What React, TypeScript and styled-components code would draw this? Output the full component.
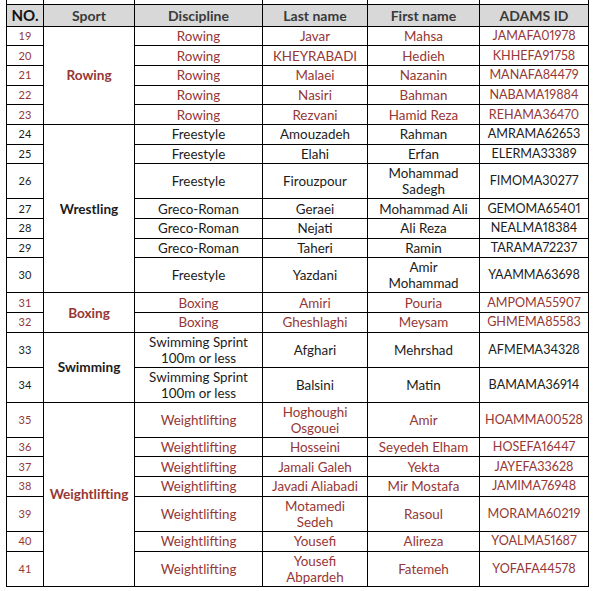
import React from "react";
import styled, { createGlobalStyle } from "styled-components";

const GlobalStyle = createGlobalStyle`
  html, body {
    margin: 0;
    padding: 0;
    background: #fff;
  }
  body {
    font-family: Lato, "Liberation Sans", sans-serif;
  }
`;

type Athlete = {
  no: number;
  discipline: string;
  last: string;
  first: string;
  id: string;
  tall?: boolean;
};

type Group = {
  sport: string;
  red: boolean;
  rows: Athlete[];
};

const groups: Group[] = [
  {
    sport: "Rowing",
    red: true,
    rows: [
      { no: 19, discipline: "Rowing", last: "Javar", first: "Mahsa", id: "JAMAFA01978" },
      { no: 20, discipline: "Rowing", last: "KHEYRABADI", first: "Hedieh", id: "KHHEFA91758" },
      { no: 21, discipline: "Rowing", last: "Malaei", first: "Nazanin", id: "MANAFA84479" },
      { no: 22, discipline: "Rowing", last: "Nasiri", first: "Bahman", id: "NABAMA19884" },
      { no: 23, discipline: "Rowing", last: "Rezvani", first: "Hamid Reza", id: "REHAMA36470" },
    ],
  },
  {
    sport: "Wrestling",
    red: false,
    rows: [
      { no: 24, discipline: "Freestyle", last: "Amouzadeh", first: "Rahman", id: "AMRAMA62653" },
      { no: 25, discipline: "Freestyle", last: "Elahi", first: "Erfan", id: "ELERMA33389" },
      { no: 26, discipline: "Freestyle", last: "Firouzpour", first: "Mohammad\nSadegh", id: "FIMOMA30277", tall: true },
      { no: 27, discipline: "Greco-Roman", last: "Geraei", first: "Mohammad Ali", id: "GEMOMA65401" },
      { no: 28, discipline: "Greco-Roman", last: "Nejati", first: "Ali Reza", id: "NEALMA18384" },
      { no: 29, discipline: "Greco-Roman", last: "Taheri", first: "Ramin", id: "TARAMA72237" },
      { no: 30, discipline: "Freestyle", last: "Yazdani", first: "Amir\nMohammad", id: "YAAMMA63698", tall: true },
    ],
  },
  {
    sport: "Boxing",
    red: true,
    rows: [
      { no: 31, discipline: "Boxing", last: "Amiri", first: "Pouria", id: "AMPOMA55907" },
      { no: 32, discipline: "Boxing", last: "Gheshlaghi", first: "Meysam", id: "GHMEMA85583" },
    ],
  },
  {
    sport: "Swimming",
    red: false,
    rows: [
      { no: 33, discipline: "Swimming Sprint\n100m or less", last: "Afghari", first: "Mehrshad", id: "AFMEMA34328", tall: true },
      { no: 34, discipline: "Swimming Sprint\n100m or less", last: "Balsini", first: "Matin", id: "BAMAMA36914", tall: true },
    ],
  },
  {
    sport: "Weightlifting",
    red: true,
    rows: [
      { no: 35, discipline: "Weightlifting", last: "Hoghoughi\nOsgouei", first: "Amir", id: "HOAMMA00528", tall: true },
      { no: 36, discipline: "Weightlifting", last: "Hosseini", first: "Seyedeh Elham", id: "HOSEFA16447" },
      { no: 37, discipline: "Weightlifting", last: "Jamali Galeh", first: "Yekta", id: "JAYEFA33628" },
      { no: 38, discipline: "Weightlifting", last: "Javadi Aliabadi", first: "Mir Mostafa", id: "JAMIMA76948" },
      { no: 39, discipline: "Weightlifting", last: "Motamedi\nSedeh", first: "Rasoul", id: "MORAMA60219", tall: true },
      { no: 40, discipline: "Weightlifting", last: "Yousefi", first: "Alireza", id: "YOALMA51687" },
      { no: 41, discipline: "Weightlifting", last: "Yousefi\nAbpardeh", first: "Fatemeh", id: "YOFAFA44578", tall: true },
    ],
  },
];

const widths = [37, 91, 128, 105, 112, 109];
const headings = ["NO.", "Sport", "Discipline", "Last name", "First name", "ADAMS ID"];

const RED = "#953735";
const INK = "#1c1c1c";

const Sheet = styled.div`
  padding-left: 6px;
`;

const Table = styled.table`
  border-collapse: collapse;
  table-layout: fixed;
  width: 582px;
`;

const StubRow = styled.tr`
  height: 4px;
`;

const StubCell = styled.td`
  padding: 0;
  border-left: 1px solid #000;
  border-right: 1px solid #000;
  border-bottom: 1px solid #000;
`;

const HeadRow = styled.tr`
  height: 22px;
`;

const HeadCell = styled.th<{ $big?: boolean }>`
  padding: 0;
  background: #d8d8d8;
  border: 1px solid #000;
  color: ${(p) => (p.$big ? "#111" : "#3a3a3a")};
  font-size: ${(p) => (p.$big ? "15px" : "14px")};
  font-weight: 700;
  text-align: center;
  vertical-align: middle;
  white-space: nowrap;
`;

const Row = styled.tr<{ $tall?: boolean }>`
  height: ${(p) => (p.$tall ? 35 : 19.7)}px;
`;

const Cell = styled.td<{ $red: boolean }>`
  padding: 0;
  border: 1px solid #000;
  color: ${(p) => (p.$red ? RED : INK)};
  font-size: 13.4px;
  line-height: 16px;
  text-align: center;
  vertical-align: middle;
  white-space: pre;
`;

const NumCell = styled(Cell)`
  font-size: 11px;
`;

const SportCell = styled(Cell)`
  font-weight: 700;
  font-size: 13.6px;
`;

const IdCell = styled(Cell)`
  font-size: 12.6px;
  font-variant-numeric: proportional-nums;
`;

export default function App() {
  return (
    <Sheet>
      <GlobalStyle />
      <Table>
        <colgroup>
          {widths.map((w, i) => (
            <col key={i} style={{ width: w }} />
          ))}
        </colgroup>
        <tbody>
          <StubRow>
            {widths.map((_, i) => (
              <StubCell key={i} />
            ))}
          </StubRow>
          <HeadRow>
            {headings.map((h, i) => (
              <HeadCell key={h} $big={i === 0}>
                {h}
              </HeadCell>
            ))}
          </HeadRow>
          {groups.map((g) =>
            g.rows.map((r, i) => (
              <Row key={r.no} $tall={r.tall}>
                <NumCell $red={g.red}>{r.no}</NumCell>
                {i === 0 && (
                  <SportCell $red={g.red} rowSpan={g.rows.length}>
                    {g.sport}
                  </SportCell>
                )}
                <Cell $red={g.red}>{r.discipline}</Cell>
                <Cell $red={g.red}>{r.last}</Cell>
                <Cell $red={g.red}>{r.first}</Cell>
                <IdCell $red={g.red}>{r.id}</IdCell>
              </Row>
            ))
          )}
        </tbody>
      </Table>
    </Sheet>
  );
}
